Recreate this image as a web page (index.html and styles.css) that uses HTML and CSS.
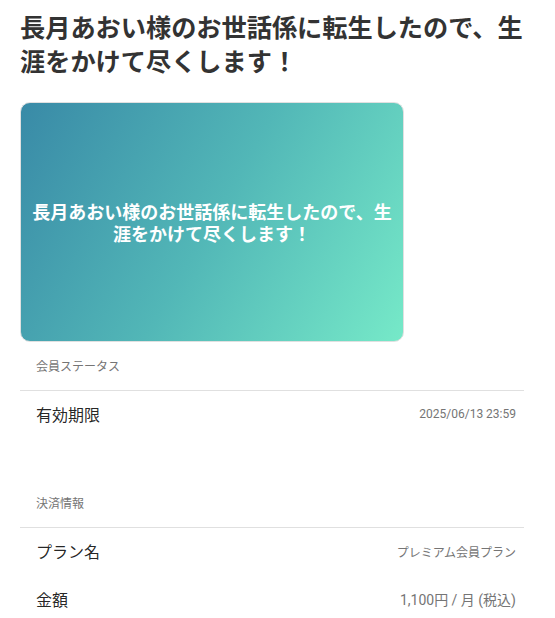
FILE: index.html
```html
<!DOCTYPE html>
<html lang="ja">
<head>
<meta charset="utf-8">
<link rel="stylesheet" href="styles.css">
</head>
<body>
<main class="page">
  <h1 class="title">長月あおい様のお世話係に転生したので、生涯をかけて尽くします！</h1>
  <div class="cover">
    <p class="cover-text">長月あおい様のお世話係に転生したので、生涯をかけて尽くします！</p>
  </div>
  <section class="section">
    <div class="section-head">会員ステータス</div>
    <div class="row"><span class="label">有効期限</span><span class="value">2025/06/13 23:59</span></div>
  </section>
  <section class="section section-gap">
    <div class="section-head">決済情報</div>
    <div class="row"><span class="label">プラン名</span><span class="value">プレミアム会員プラン</span></div>
    <div class="row"><span class="label">金額</span><span class="value value-lg">1,100円 / 月 (税込)</span></div>
  </section>
</main>
</body>
</html>
```

FILE: styles.css
```css
* { box-sizing: border-box; }
html, body { margin: 0; padding: 0; background: #fff; }
body {
  font-family: Roboto, "Noto Sans CJK JP", sans-serif;
  color: rgba(0,0,0,0.87);
}
.page {
  padding: 9px 20px 0 20px;
}
.title {
  margin: 0 0 25px 0;
  font-family: "Noto Sans CJK JP", sans-serif;
  font-size: 25.2px;
  line-height: 34px;
  font-weight: 700;
  color: #333;
}
.cover {
  width: 384px;
  height: 240px;
  border: 1px solid #e0e0e0;
  border-radius: 10px;
  background: linear-gradient(120deg, #398aa7 0%, #52b7b7 50%, #76e9c8 100%);
  display: flex;
  align-items: center;
  justify-content: center;
  padding: 0 6px;
}
.cover-text {
  margin: 0;
  color: #fff;
  font-family: "Noto Sans CJK JP", sans-serif;
  font-weight: 700;
  font-size: 18px;
  line-height: 22px;
  text-align: center;
}
.section {
  width: 504px;
}
.section-gap { margin-top: 40px; }
.section-head {
  height: 49px;
  display: flex;
  align-items: center;
  padding: 0 16px 1px;
  font-size: 12px;
  color: #757575;
  border-bottom: 1px solid #e0e0e0;
}
.row {
  height: 48px;
  display: flex;
  align-items: center;
  justify-content: space-between;
  padding: 0 8px 2px 16px;
}
.label {
  font-size: 16px;
  font-family: "Noto Sans CJK JP", sans-serif;
}
.value {
  font-size: 12px;
  color: #757575;
}
.value-lg {
  font-size: 14px;
}
```
